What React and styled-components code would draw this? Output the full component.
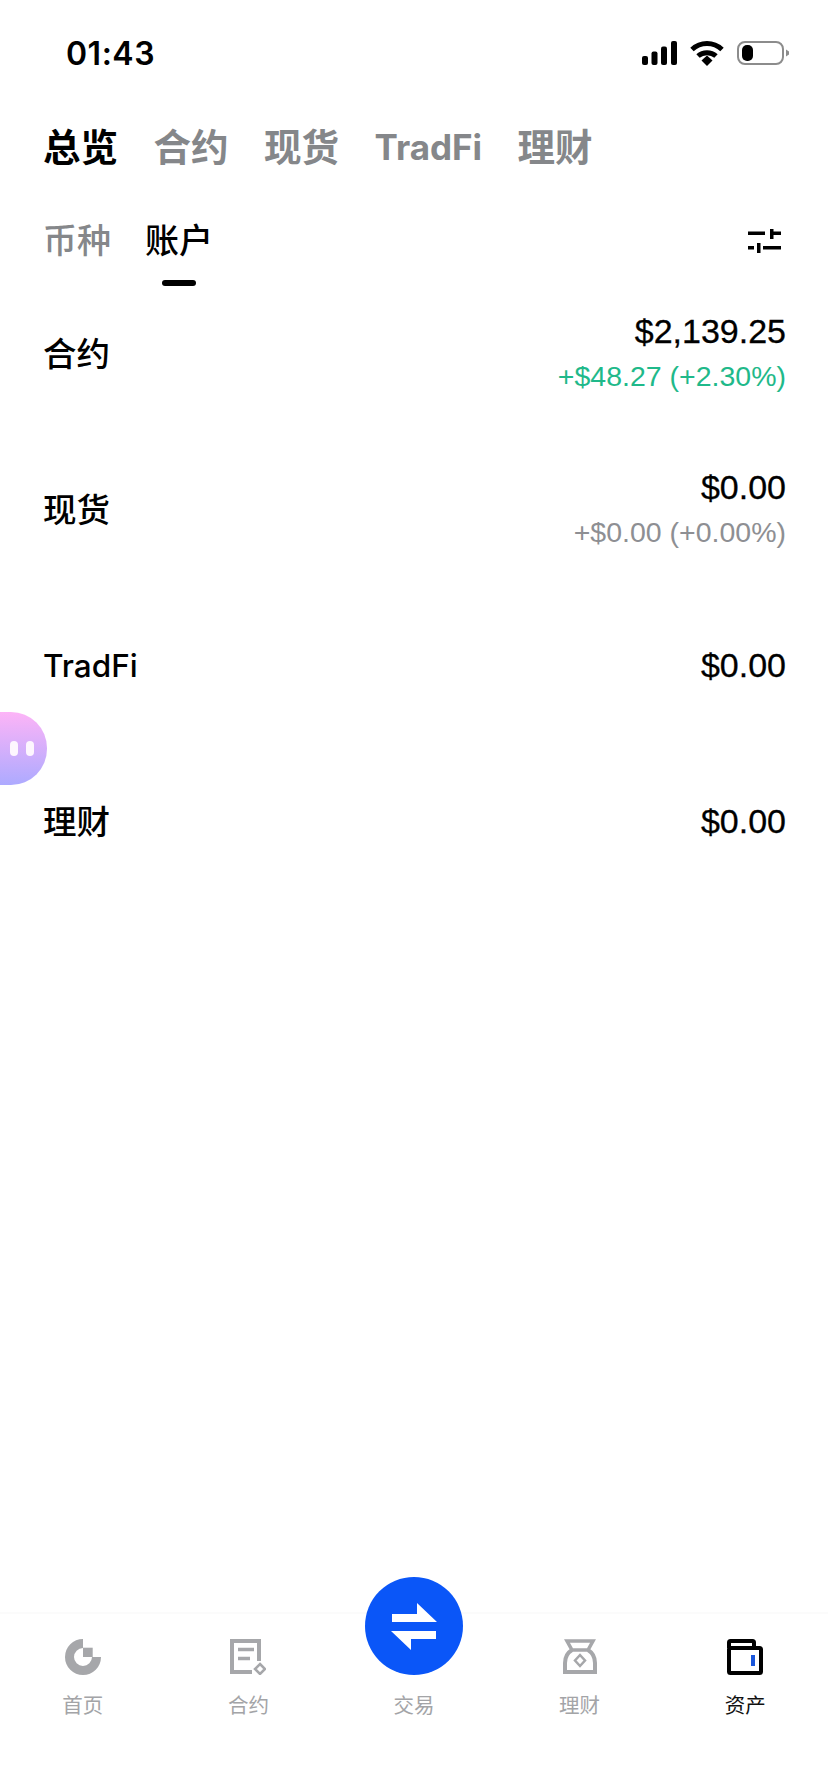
import React from 'react';
import styled, { createGlobalStyle } from 'styled-components';

const GlobalStyle = createGlobalStyle`
  html, body {
    margin: 0;
    padding: 0;
    background: #ffffff;
  }
  * {
    box-sizing: border-box;
  }
`;

const Page = styled.div`
  width: 828px;
  height: 1792px;
  display: flex;
  flex-direction: column;
  position: relative;
  overflow: hidden;
  background: #ffffff;
  color: #000000;
  font-family: Inter, "Noto Sans CJK SC", sans-serif;
`;

const StatusBar = styled.div`
  height: 106px;
  padding: 0 39px 0 66px;
  display: flex;
  align-items: center;
  justify-content: space-between;
`;

const Time = styled.span`
  font-size: 32px;
  font-weight: 600;
  letter-spacing: 0.5px;
`;

const StatusIcons = styled.div`
  display: flex;
  align-items: center;
  gap: 13px;
`;

const MainTabs = styled.div`
  height: 60px;
  margin-top: 8px;
  padding-left: 43px;
  display: flex;
  align-items: center;
  gap: 35.5px;
`;

const MainTab = styled.span`
  font-size: ${(p) => (p.$latin ? '35px' : '37.5px')};
  padding-top: ${(p) => (p.$latin ? '6px' : '0')};
  font-weight: 700;
  color: ${(p) => (p.$active ? '#000000' : '#85878a')};
`;

const SubTabs = styled.div`
  height: 60px;
  margin-top: 34px;
  padding: 0 47px 0 43px;
  display: flex;
  align-items: center;
  gap: 34px;
`;

const SubTab = styled.span`
  position: relative;
  font-size: 34px;
  font-weight: 500;
  color: ${(p) => (p.$active ? '#000000' : '#85878a')};
`;

const Indicator = styled.i`
  position: absolute;
  left: 17px;
  top: 66px;
  width: 34px;
  height: 6px;
  border-radius: 3px;
  background: #000000;
`;

const FilterButton = styled.div`
  margin-left: auto;
  display: flex;
  padding-top: 5px;
`;

const AccountList = styled.div`
  flex: 1;
  margin-top: 5px;
  padding: 0 42px 0 43px;
`;

const AccountRow = styled.div`
  height: 156px;
  display: flex;
  align-items: center;
  justify-content: space-between;
`;

const AccountName = styled.span`
  font-size: ${(p) => (p.$latin ? '31.5px' : '33.5px')};
  padding-top: ${(p) => (p.$latin ? '5px' : '0')};
  font-weight: 500;
`;

const Amounts = styled.div`
  padding-top: 4px;
  display: flex;
  flex-direction: column;
  align-items: flex-end;
  font-family: "Liberation Sans", sans-serif;
`;

const Balance = styled.span`
  font-size: 34px;
  line-height: 46px;
  -webkit-text-stroke: 0.3px #000000;
`;

const Change = styled.span`
  font-size: 28.5px;
  line-height: 45px;
  color: ${(p) => (p.$up ? '#1fb98a' : '#8e8f93')};
`;

const Assistant = styled.div`
  position: absolute;
  left: 0;
  top: 712px;
  width: 47px;
  height: 73px;
  border-radius: 0 36px 36px 0;
  background: linear-gradient(180deg, #fdb4f7 0%, #adaaff 100%);
  display: flex;
  align-items: center;
  gap: 8px;
  padding-left: 10px;
`;

const Eye = styled.i`
  width: 8px;
  height: 15px;
  border-radius: 4px;
  background: #fdf6fe;
`;

const BottomNav = styled.nav`
  height: 180px;
  display: grid;
  grid-template-columns: repeat(5, 1fr);
  border-top: 2px solid #fbfbfb;
`;

const NavItem = styled.div`
  position: relative;
  padding-top: 25px;
  display: flex;
  flex-direction: column;
  align-items: center;
`;

const NavIcon = styled.div`
  height: 36px;
  display: flex;
  align-items: center;
  justify-content: center;
`;

const NavLabel = styled.span`
  margin-top: 16px;
  font-size: 20.5px;
  line-height: 30px;
  color: ${(p) => (p.$active ? '#111111' : '#a3a4a7')};
`;

const TradeButton = styled.div`
  position: absolute;
  top: -37px;
  left: 50%;
  width: 98px;
  height: 98px;
  margin-left: -49px;
  border-radius: 50%;
  background: #0a56f8;
  display: flex;
  align-items: center;
  justify-content: center;
`;

const GRAY = '#a6a7aa';

function SignalIcon() {
  return (
    <svg width="35" height="24" viewBox="0 0 35 24" fill="#000">
      <rect x="0" y="15" width="6" height="9" rx="2" />
      <rect x="9.5" y="10.5" width="6" height="13.5" rx="2" />
      <rect x="19" y="5.5" width="6" height="18.5" rx="2" />
      <rect x="29" y="0" width="6" height="24" rx="2" />
    </svg>
  );
}

function WifiIcon() {
  return (
    <svg width="34" height="26" viewBox="0 0 34 26" fill="none" stroke="#000" strokeWidth="5">
      <path d="M2 9.5C10.5 1.5 23.5 1.5 32 9.5" />
      <path d="M8 16C13 11.5 21 11.5 26 16" />
      <path d="M11.5 20.5L17 15.5L22.5 20.5L17 26Z" fill="#000" stroke="none" />
    </svg>
  );
}

function BatteryIcon() {
  return (
    <svg width="52" height="24" viewBox="0 0 52 24">
      <rect x="1" y="1" width="45" height="22" rx="7" fill="none" stroke="#8c8c8c" strokeWidth="2" />
      <rect x="5" y="4" width="11" height="16" rx="5" fill="#000" />
      <path d="M49 8.5L52 10.5V13.5L49 15.5Z" fill="#8c8c8c" />
    </svg>
  );
}

function FilterIcon() {
  return (
    <svg width="33" height="24" viewBox="0 0 33 24" fill="#000">
      <rect x="0" y="2.5" width="17" height="3.5" />
      <rect x="22" y="0" width="3.5" height="10" />
      <rect x="25" y="2.5" width="8" height="3.5" />
      <rect x="0" y="17" width="6" height="3.5" />
      <rect x="9" y="14" width="3.5" height="10" />
      <rect x="15" y="17" width="18" height="3.5" />
    </svg>
  );
}

function HomeIcon() {
  return (
    <svg width="36" height="36" viewBox="0 0 36 36" fill={GRAY}>
      <path d="M18 0A18 18 0 1 0 36 18H27A9 9 0 1 1 18 9Z" />
      <rect x="18" y="8.7" width="9.7" height="9.3" />
    </svg>
  );
}

function ContractIcon() {
  return (
    <svg width="36" height="36" viewBox="0 0 36 36" fill="none" stroke={GRAY} strokeWidth="4">
      <path d="M29 22V2H2V33H22" />
      <path d="M8 10.5H24M8 19.5H20" strokeWidth="3.5" />
      <path d="M30 25L35 30L30 35L25 30Z" strokeWidth="2.5" />
    </svg>
  );
}

function ExchangeIcon() {
  return (
    <svg width="46" height="47" viewBox="0 0 46 47" fill="#fff">
      <path d="M1 11H26V0L46 19H1Z" />
      <path d="M45 28V36H20V47L0 28Z" />
    </svg>
  );
}

function FinanceIcon() {
  return (
    <svg width="34" height="36" viewBox="0 0 34 36" fill="none" stroke={GRAY} strokeWidth="4">
      <path d="M4 2H30L25 11H9Z" strokeWidth="3.5" />
      <path d="M9 11C4 14 2 19 2 24V33H32V24C32 19 30 14 25 11" />
      <path d="M17 16L22 21.5L17 27L12 21.5Z" strokeWidth="2.5" />
    </svg>
  );
}

function WalletIcon() {
  return (
    <svg width="36" height="36" viewBox="0 0 36 36" fill="none" stroke="#000" strokeWidth="4">
      <path d="M2 9V3.5Q2 2 3.5 2H25.5Q27 2 27 3.5V9" />
      <rect x="2" y="9" width="32" height="25" rx="1.5" />
      <rect x="24" y="16" width="4" height="11" fill="#1a56db" stroke="none" />
    </svg>
  );
}

const accounts = [
  { name: '合约', balance: '$2,139.25', change: '+$48.27 (+2.30%)', up: true },
  { name: '现货', balance: '$0.00', change: '+$0.00 (+0.00%)' },
  { name: 'TradFi', latin: true, balance: '$0.00' },
  { name: '理财', balance: '$0.00' },
];

export default function App() {
  return (
    <Page>
      <GlobalStyle />
      <StatusBar>
        <Time>01:43</Time>
        <StatusIcons>
          <SignalIcon />
          <WifiIcon />
          <BatteryIcon />
        </StatusIcons>
      </StatusBar>

      <MainTabs>
        <MainTab $active>总览</MainTab>
        <MainTab>合约</MainTab>
        <MainTab>现货</MainTab>
        <MainTab $latin>TradFi</MainTab>
        <MainTab>理财</MainTab>
      </MainTabs>

      <SubTabs>
        <SubTab>币种</SubTab>
        <SubTab $active>
          账户
          <Indicator />
        </SubTab>
        <FilterButton>
          <FilterIcon />
        </FilterButton>
      </SubTabs>

      <AccountList>
        {accounts.map((account) => (
          <AccountRow key={account.name}>
            <AccountName $latin={account.latin}>{account.name}</AccountName>
            <Amounts>
              <Balance>{account.balance}</Balance>
              {account.change && <Change $up={account.up}>{account.change}</Change>}
            </Amounts>
          </AccountRow>
        ))}
      </AccountList>

      <Assistant>
        <Eye />
        <Eye />
      </Assistant>

      <BottomNav>
        <NavItem>
          <NavIcon><HomeIcon /></NavIcon>
          <NavLabel>首页</NavLabel>
        </NavItem>
        <NavItem>
          <NavIcon><ContractIcon /></NavIcon>
          <NavLabel>合约</NavLabel>
        </NavItem>
        <NavItem>
          <TradeButton><ExchangeIcon /></TradeButton>
          <NavIcon />
          <NavLabel>交易</NavLabel>
        </NavItem>
        <NavItem>
          <NavIcon><FinanceIcon /></NavIcon>
          <NavLabel>理财</NavLabel>
        </NavItem>
        <NavItem>
          <NavIcon><WalletIcon /></NavIcon>
          <NavLabel $active>资产</NavLabel>
        </NavItem>
      </BottomNav>
    </Page>
  );
}
